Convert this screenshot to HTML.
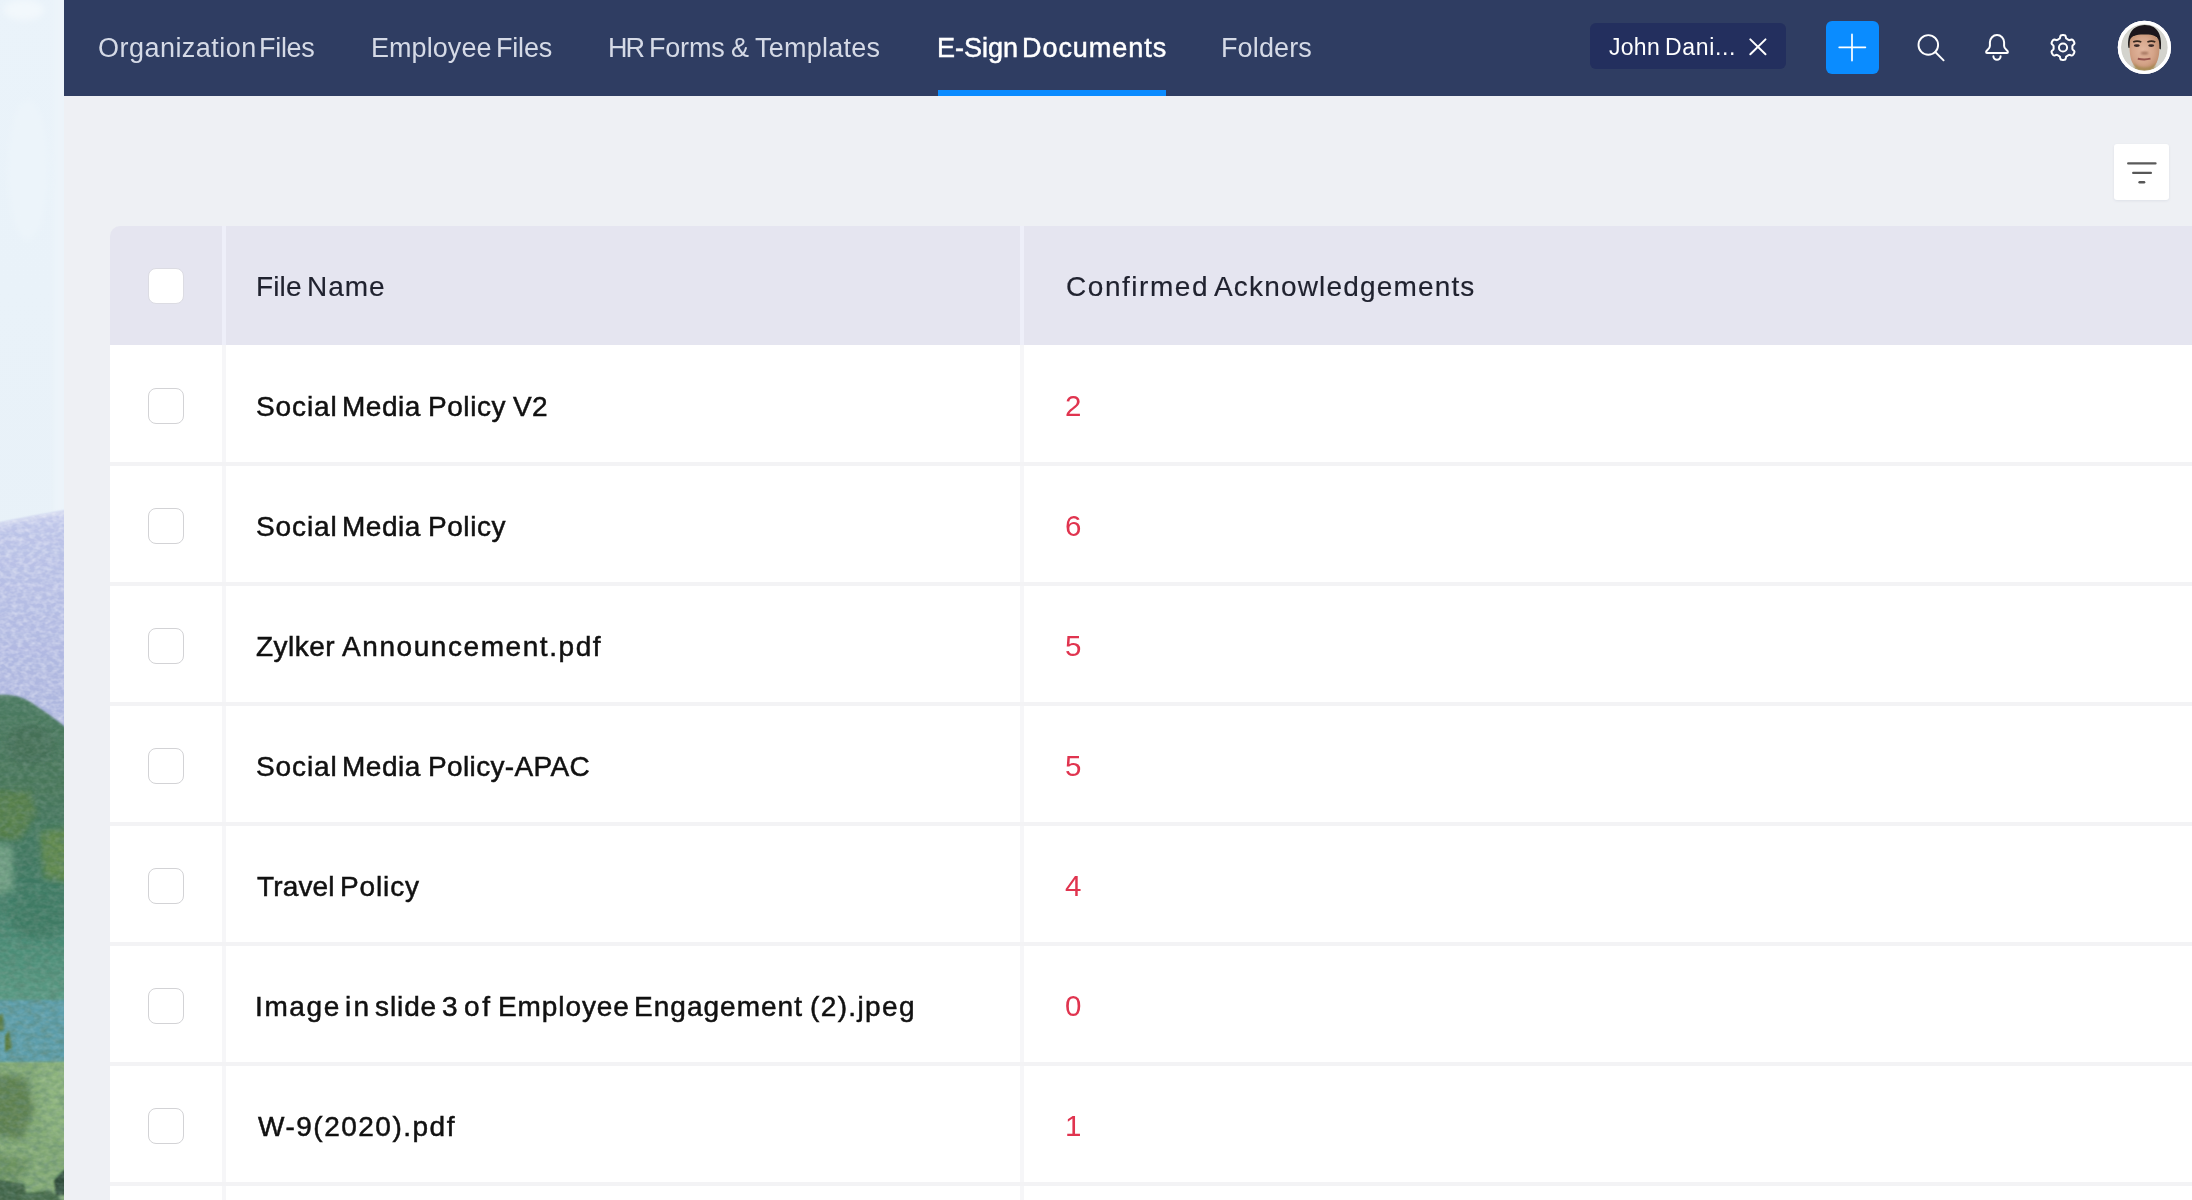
<!DOCTYPE html>
<html>
<head>
<meta charset="utf-8">
<title>E-Sign Documents</title>
<style>
*{box-sizing:border-box;margin:0;padding:0}
html,body{width:2192px;height:1200px;overflow:hidden;background:#eef0f4;font-family:"Liberation Sans",sans-serif;}
#root{position:absolute;left:0;top:0;width:2192px;height:1200px;overflow:hidden;background:#eef0f4}
.abs{position:absolute}
.t{position:absolute;white-space:nowrap;line-height:1;transform-origin:0 0;will-change:transform}
#strip{position:absolute;left:0;top:0;width:64px;height:1200px;overflow:hidden}
#nav{position:absolute;left:64px;top:0;width:2128px;height:96px;background:#2f3d62}
.nv{color:#d5dae6;font-size:27px}
.nva{color:#ffffff;font-size:27px;-webkit-text-stroke:0.5px #fff}
.chip{color:#fff;font-size:23px}
#uline{position:absolute;left:938px;top:90px;width:228px;height:6px;background:#0b8cff}
#chip{position:absolute;left:1590px;top:23px;width:196px;height:46px;border-radius:6px;background:#232f5e}
#plus{position:absolute;left:1826px;top:20.6px;width:52.6px;height:53.5px;border-radius:6px;background:#0a8cff}
#filter{position:absolute;left:2113.7px;top:144px;width:55.6px;height:56px;border-radius:3px;background:#fff;box-shadow:0 1px 3px rgba(40,50,90,.08)}
#thead{position:absolute;left:110px;top:226px;width:2090px;height:119px;background:#e5e5f0;border-top-left-radius:10px}
#tbody{position:absolute;left:110px;top:345px;width:2090px;height:860px;background:#fff}
.hs{position:absolute;top:226px;width:3.6px;height:119px;background:#eeeff9}
.vs{position:absolute;top:345px;width:3.6px;height:860px;background:#f6f6f8}
.rs{position:absolute;left:110px;width:2090px;height:3.6px;background:#f3f3f5}
.cb{position:absolute;left:148px;width:35.5px;height:35.5px;border-radius:8px;border:1.5px solid #d3d3d6;background:#fff}
.cbh{border:1.2px solid #dcdce3}
.fn{color:#111;font-size:28px;left:256px;-webkit-text-stroke:0.5px #111}
.num{color:#e0344f;font-size:29.5px;left:1065.4px}
.th{color:#20222f;font-size:28px;-webkit-text-stroke:0.15px #20222f}
</style>
</head>
<body>
<div id="root">
  <div id="strip"><svg width="104" height="1240" viewBox="-20 -20 104 1240" style="position:absolute;left:-20px;top:-20px">
    <defs>
      <linearGradient id="sky" x1="0" y1="0" x2="0" y2="1"><stop offset="0" stop-color="#eaf3fa"/><stop offset="0.5" stop-color="#e8f1f8"/><stop offset="1" stop-color="#e5eef7"/></linearGradient>
      <linearGradient id="mtn" gradientUnits="userSpaceOnUse" x1="0" y1="508" x2="0" y2="730"><stop offset="0" stop-color="#c6cced"/><stop offset="0.12" stop-color="#bbc3e7"/><stop offset="0.6" stop-color="#b2bae2"/><stop offset="1" stop-color="#acb5de"/></linearGradient>
      <linearGradient id="grn" gradientUnits="userSpaceOnUse" x1="0" y1="695" x2="0" y2="1005"><stop offset="0" stop-color="#4b7a5f"/><stop offset="0.3" stop-color="#477659"/><stop offset="0.6" stop-color="#3d7862"/><stop offset="0.82" stop-color="#4c8d77"/><stop offset="1" stop-color="#5a9a84"/></linearGradient>
      <filter id="tex" filterUnits="userSpaceOnUse" x="-20" y="480" width="104" height="760"><feTurbulence type="fractalNoise" baseFrequency="0.17 0.24" numOctaves="2" seed="7" result="n"/><feColorMatrix in="n" type="matrix" values="0 0 0 0 1  0 0 0 0 1  0 0 0 0 1  1.8 0 0 0 -0.62"/></filter>
      <filter id="texd" filterUnits="userSpaceOnUse" x="-20" y="680" width="104" height="540"><feTurbulence type="fractalNoise" baseFrequency="0.12 0.18" numOctaves="2" seed="23" result="n"/><feColorMatrix in="n" type="matrix" values="0 0 0 0 0.1  0 0 0 0 0.22  0 0 0 0 0.16  0 1.8 0 0 -0.62"/></filter>
      <filter id="sb" filterUnits="userSpaceOnUse" x="-20" y="-20" width="104" height="1240"><feGaussianBlur stdDeviation="3"/></filter>
      <filter id="sb1" filterUnits="userSpaceOnUse" x="-20" y="-20" width="104" height="1240"><feGaussianBlur stdDeviation="1.1"/></filter>
      <clipPath id="cm"><path d="M-20 527 C10 520 40 515 84 507 V1220 H-20 Z"/></clipPath>
      <clipPath id="cg"><path d="M-20 700 C-4 692 18 694 30 702 C44 711 54 718 84 742 V1220 H-20 Z"/></clipPath>
    </defs>
    <rect x="-20" y="-20" width="104" height="1240" fill="url(#sky)"/>
    <g filter="url(#sb)"><ellipse cx="24" cy="10" rx="20" ry="10" fill="#f2f8fc"/><ellipse cx="28" cy="170" rx="20" ry="70" fill="#ecf4fa"/><rect x="54" y="-20" width="12" height="540" fill="#edf4fa"/></g>
    <path d="M-20 527 C10 520 40 515 84 507 V760 H-20 Z" fill="url(#mtn)" filter="url(#sb1)"/>
    <path d="M-20 529 C10 522 40 517 84 509" stroke="#d5daf0" stroke-width="3" fill="none" filter="url(#sb1)"/>
    <g clip-path="url(#cm)"><rect x="-20" y="480" width="104" height="300" filter="url(#tex)" opacity="0.42"/></g>
    <path d="M-20 700 C-4 692 18 694 30 702 C44 711 54 718 84 742 V1010 H-20 Z" fill="url(#grn)" filter="url(#sb1)"/>
    <g filter="url(#sb)">
      <path d="M-20 790 L30 792 L36 812 L20 840 L-20 838 Z" fill="#587f47" opacity=".85"/>
      <path d="M40 832 L84 826 L84 886 L44 878 Z" fill="#638a48" opacity=".85"/>
      <path d="M-20 842 L12 846 L14 890 L-20 900 Z" fill="#7aa78a" opacity=".85"/>
      <ellipse cx="30" cy="745" rx="24" ry="20" fill="#456f57"/>
      <ellipse cx="40" cy="915" rx="30" ry="24" fill="#3c7a63"/>
    </g>
    <rect x="-20" y="1000" width="104" height="64" fill="#5d9eab" filter="url(#sb1)"/>
    <rect x="-20" y="1062" width="104" height="160" fill="#84aa75" filter="url(#sb1)"/>
    <g filter="url(#sb)">
      <path d="M-20 1072 L26 1078 L34 1110 L22 1140 L-20 1132 Z" fill="#5f8150"/>
      <path d="M36 1066 L84 1062 L84 1150 L44 1130 Z" fill="#8eb47d"/>
      <path d="M-20 1150 L30 1160 L20 1182 L-20 1178 Z" fill="#6d935f"/>
    </g>
    <g filter="url(#sb1)">
      <path d="M-4 1016 L3 1014 L4 1030 L-4 1032 Z M5 1036 L9 1030 L12 1048 L5 1052 Z" fill="#5a7a3e"/>
      <path d="M-20 1176 L24 1184 L34 1220 L-20 1220 Z" fill="#3f6244"/>
      <path d="M84 1150 L54 1180 L56 1196 L84 1192 Z" fill="#2f4a38"/>
      <path d="M20 1194 L50 1190 L84 1220 L20 1220 Z" fill="#476b4a"/>
    </g>
    <g clip-path="url(#cg)"><rect x="-20" y="680" width="104" height="540" filter="url(#texd)" opacity="0.55"/><rect x="-20" y="680" width="104" height="540" filter="url(#tex)" opacity="0.13"/></g>
  </svg></div>
  <div id="nav"></div>
  <div id="uline"></div>
  <div id="chip"></div>
  <div id="plus"></div>
  <div id="filter"></div>

  <div id="thead"></div>
  <div id="tbody"></div>
  <div class="hs" style="left:222.2px"></div>
  <div class="hs" style="left:1020.2px"></div>
  <div class="vs" style="left:222.2px"></div>
  <div class="vs" style="left:1020.2px"></div>

  <div class="rs" style="top:462px"></div>
  <div class="rs" style="top:582px"></div>
  <div class="rs" style="top:702px"></div>
  <div class="rs" style="top:822px"></div>
  <div class="rs" style="top:942px"></div>
  <div class="rs" style="top:1062px"></div>
  <div class="rs" style="top:1182px"></div>

  <div class="cb cbh" style="top:268px"></div>
  <div class="cb" style="top:388px"></div>
  <div class="cb" style="top:508px"></div>
  <div class="cb" style="top:628px"></div>
  <div class="cb" style="top:748px"></div>
  <div class="cb" style="top:868px"></div>
  <div class="cb" style="top:988px"></div>
  <div class="cb" style="top:1108px"></div>

  <!--ICONS-START-->
  <svg class="abs" style="left:1740px;top:30px" width="36" height="34" viewBox="1740 30 36 34"><path d="M1750.3 39.4 L1765.5 54.2 M1765.5 39.4 L1750.3 54.2" stroke="#fff" stroke-width="2" fill="none" stroke-linecap="round"/></svg>
  <svg class="abs" style="left:1826px;top:20px" width="54" height="55" viewBox="1826 20 54 55"><path d="M1839.2 47.3 H1865.4 M1852 34.4 V60.6" stroke="#fff" stroke-width="1.7" fill="none" stroke-linecap="round"/></svg>
  <svg class="abs" style="left:1910px;top:26px" width="44" height="44" viewBox="1910 26 44 44"><circle cx="1928.3" cy="44.9" r="9.8" stroke="#fff" stroke-width="1.9" fill="none"/><path d="M1935.3 52 L1943.6 60.3" stroke="#fff" stroke-width="1.9" stroke-linecap="round"/></svg>
  <svg class="abs" style="left:1976px;top:26px" width="42" height="44" viewBox="-21 26 42 44"><path d="M-7.1 42.3 A7.1 7.2 0 0 1 7.1 42.3 V46 C7.1 49.2 10.9 50 10.9 52 Q10.9 52.9 10 52.9 H-10 Q-10.9 52.9 -10.9 52 C-10.9 50 -7.1 49.2 -7.1 46 Z" stroke="#fff" stroke-width="2" fill="none" stroke-linejoin="round"/><path d="M-3.6 56.3 A3.6 3.4 0 0 0 3.6 56.3" stroke="#fff" stroke-width="2" fill="none" stroke-linecap="round"/></svg>
  <svg class="abs" style="left:2042px;top:27px" width="42" height="42" viewBox="-21 -20.5 42 42"><path d="M9.40 -0.00L9.39 -0.41L9.38 -0.82L9.38 -1.24L9.46 -1.67L9.80 -2.17L10.53 -2.82L11.22 -3.54L11.45 -4.17L11.40 -4.72L11.22 -5.23L11.00 -5.72L10.74 -6.20L10.45 -6.66L10.14 -7.10L9.79 -7.51L9.34 -7.84L8.67 -7.95L7.71 -7.71L6.78 -7.40L6.18 -7.36L5.76 -7.51L5.40 -7.72L5.05 -7.93L4.70 -8.14L4.34 -8.34L3.98 -8.54L3.62 -8.75L3.29 -9.03L3.02 -9.57L2.82 -10.53L2.55 -11.49L2.12 -12.00L1.61 -12.23L1.08 -12.33L0.54 -12.38L0.00 -12.40L-0.54 -12.38L-1.08 -12.33L-1.61 -12.23L-2.12 -12.00L-2.55 -11.49L-2.82 -10.53L-3.02 -9.57L-3.29 -9.03L-3.62 -8.75L-3.98 -8.54L-4.34 -8.34L-4.70 -8.14L-5.05 -7.93L-5.40 -7.72L-5.76 -7.51L-6.18 -7.36L-6.78 -7.40L-7.71 -7.71L-8.67 -7.95L-9.34 -7.84L-9.79 -7.51L-10.14 -7.10L-10.45 -6.66L-10.74 -6.20L-11.00 -5.72L-11.22 -5.23L-11.40 -4.72L-11.45 -4.17L-11.22 -3.54L-10.53 -2.82L-9.80 -2.17L-9.46 -1.67L-9.38 -1.24L-9.38 -0.82L-9.39 -0.41L-9.40 -0.00L-9.39 0.41L-9.38 0.82L-9.38 1.24L-9.46 1.67L-9.80 2.17L-10.53 2.82L-11.22 3.54L-11.45 4.17L-11.40 4.72L-11.22 5.23L-11.00 5.72L-10.74 6.20L-10.45 6.66L-10.14 7.10L-9.79 7.51L-9.34 7.84L-8.67 7.95L-7.71 7.71L-6.78 7.40L-6.18 7.36L-5.76 7.51L-5.40 7.72L-5.05 7.93L-4.70 8.14L-4.34 8.34L-3.98 8.54L-3.62 8.75L-3.29 9.03L-3.02 9.57L-2.82 10.53L-2.55 11.49L-2.12 12.00L-1.61 12.23L-1.08 12.33L-0.54 12.38L-0.00 12.40L0.54 12.38L1.08 12.33L1.61 12.23L2.12 12.00L2.55 11.49L2.82 10.53L3.02 9.57L3.29 9.03L3.62 8.75L3.98 8.54L4.34 8.34L4.70 8.14L5.05 7.93L5.40 7.72L5.76 7.51L6.18 7.36L6.78 7.40L7.71 7.71L8.67 7.95L9.34 7.84L9.79 7.51L10.14 7.10L10.45 6.66L10.74 6.20L11.00 5.72L11.22 5.23L11.40 4.72L11.45 4.17L11.22 3.54L10.53 2.82L9.80 2.17L9.46 1.67L9.38 1.24L9.38 0.82L9.39 0.41Z" stroke="#fff" stroke-width="2" fill="none" stroke-linejoin="round"/><circle cx="0" cy="0" r="4.1" stroke="#fff" stroke-width="2" fill="none"/></svg>
  <svg class="abs" style="left:2117px;top:20px" width="56" height="56" viewBox="0 0 56 56">
    <defs>
      <clipPath id="avc"><circle cx="27.4" cy="27.4" r="23.5"/></clipPath>
      <filter id="avb" x="-20%" y="-20%" width="140%" height="140%"><feGaussianBlur stdDeviation="0.7"/></filter>
      <filter id="avb2" x="-20%" y="-20%" width="140%" height="140%"><feGaussianBlur stdDeviation="1.3"/></filter>
      <radialGradient id="skin" cx="0.45" cy="0.45" r="0.6"><stop offset="0" stop-color="#e3b8a0"/><stop offset="0.6" stop-color="#d5a489"/><stop offset="1" stop-color="#bf8c6c"/></radialGradient>
    </defs>
    <circle cx="27.4" cy="27.4" r="26.6" fill="#fff"/>
    <g clip-path="url(#avc)">
      <rect x="0" y="0" width="56" height="56" fill="#d3d3cd"/>
      <g filter="url(#avb)">
        <path d="M11.6 28 C10 19 12.5 5.2 27.8 5 C42 5 45.2 17 43.8 29.5 L41 28 L39.8 17 L16 16.5 L14 27.5 Z" fill="#1b191a"/>
        <path d="M12.8 21 C13.2 15.8 20 14.2 27.6 14.4 C35 14.2 41.4 15.8 42 21.5 C43 29 42.4 37 39.6 42.8 C36.8 48.4 31.8 50 27.6 50 C23.4 50 18.3 48.4 15.4 42.8 C12.6 37 12.2 28 12.8 21 Z" fill="url(#skin)"/>
      </g>
      <g filter="url(#avb2)">
        <path d="M17 43 C22 49 33 49 38.5 43 L37 52 L18 52 Z" fill="#a3884f" opacity=".85"/>
        <ellipse cx="27.5" cy="33.2" rx="3.8" ry="1.4" fill="#8a5a44" opacity=".75"/>
      </g>
      <g filter="url(#avb)">
        <path d="M16.2 22 Q20 20.3 24.3 22 M30.4 22 Q34.5 20.3 38.3 22" stroke="#35261f" stroke-width="1.7" fill="none"/>
        <ellipse cx="19.8" cy="25.6" rx="3" ry="1.4" fill="#3a2a28"/><ellipse cx="34.2" cy="25.6" rx="3" ry="1.4" fill="#3a2a28"/>
        <path d="M20.8 38.7 Q27.3 40.2 33.5 38.7" stroke="#96544e" stroke-width="1.9" fill="none"/>
      </g>
    </g>
    <circle cx="27.4" cy="27.4" r="25" fill="none" stroke="#fff" stroke-width="3.3"/>
  </svg>
  <svg class="abs" style="left:2114px;top:144px" width="56" height="56" viewBox="2114 144 56 56"><path d="M2128.2 163.4 H2155.5" stroke="#5a5a5a" stroke-width="2.3" stroke-linecap="round"/><path d="M2133.2 172.9 H2150.9" stroke="#575757" stroke-width="2.3" stroke-linecap="round"/><path d="M2139.6 182.2 H2144.1" stroke="#575757" stroke-width="2.4" stroke-linecap="round"/></svg>
  <!--ICONS-END-->
  <!--TEXT-START-->
  <div class="t nv" id="n1w0" style="left:97.5px;top:35px;letter-spacing:0.47px">Organization</div>
  <div class="t nv" id="n1w1" style="left:259.4px;top:35px;letter-spacing:-0.30px">Files</div>
  <div class="t nv" id="n2w0" style="left:371.1px;top:35px;letter-spacing:0.06px">Employee</div>
  <div class="t nv" id="n2w1" style="left:496.1px;top:35px;letter-spacing:-0.20px">Files</div>
  <div class="t nv" id="n3w0" style="left:607.5px;top:35px;letter-spacing:-2.00px">HR</div>
  <div class="t nv" id="n3w1" style="left:649.1px;top:35px;letter-spacing:-0.20px">Forms</div>
  <div class="t nv" id="n3w2" style="left:731.0px;top:35px;letter-spacing:0.00px">&amp;</div>
  <div class="t nv" id="n3w3" style="left:755.3px;top:35px;letter-spacing:0.25px">Templates</div>
  <div class="t nva" id="n4w0" style="left:937.1px;top:35px;letter-spacing:-0.00px">E-Sign</div>
  <div class="t nva" id="n4w1" style="left:1022.0px;top:35px;letter-spacing:0.95px">Documents</div>
  <div class="t nv" id="n5w0" style="left:1221.0px;top:35px;letter-spacing:0.13px">Folders</div>
  <div class="t chip" id="n6w0" style="left:1609.3px;top:36px;letter-spacing:0.27px">John</div>
  <div class="t chip" id="n6w1" style="left:1664.9px;top:36px;letter-spacing:0.67px">Dani...</div>
  <div class="t th" id="h1w0" style="left:255.7px;top:273px;letter-spacing:0.13px">File</div>
  <div class="t th" id="h1w1" style="left:307.3px;top:273px;letter-spacing:0.93px">Name</div>
  <div class="t th" id="h2w0" style="left:1065.7px;top:273px;letter-spacing:1.55px">Confirmed</div>
  <div class="t th" id="h2w1" style="left:1214.2px;top:273px;letter-spacing:1.17px">Acknowledgements</div>
  <div class="t fn" id="r1w0" style="left:255.6px;top:393px;letter-spacing:0.88px">Social</div>
  <div class="t fn" id="r1w1" style="left:342.0px;top:393px;letter-spacing:0.50px">Media</div>
  <div class="t fn" id="r1w2" style="left:428.2px;top:393px;letter-spacing:0.56px">Policy</div>
  <div class="t fn" id="r1w3" style="left:513.3px;top:393px;letter-spacing:0.40px">V2</div>
  <div class="t fn" id="r2w0" style="left:255.6px;top:513px;letter-spacing:0.88px">Social</div>
  <div class="t fn" id="r2w1" style="left:342.0px;top:513px;letter-spacing:0.50px">Media</div>
  <div class="t fn" id="r2w2" style="left:428.2px;top:513px;letter-spacing:0.56px">Policy</div>
  <div class="t fn" id="r3w0" style="left:255.6px;top:633px;letter-spacing:0.48px">Zylker</div>
  <div class="t fn" id="r3w1" style="left:342.2px;top:633px;letter-spacing:1.57px">Announcement.pdf</div>
  <div class="t fn" id="r4w0" style="left:255.6px;top:753px;letter-spacing:0.88px">Social</div>
  <div class="t fn" id="r4w1" style="left:342.0px;top:753px;letter-spacing:0.50px">Media</div>
  <div class="t fn" id="r4w2" style="left:428.2px;top:753px;letter-spacing:0.36px">Policy-APAC</div>
  <div class="t fn" id="r5w0" style="left:256.6px;top:873px;letter-spacing:0.16px">Travel</div>
  <div class="t fn" id="r5w1" style="left:339.5px;top:873px;letter-spacing:0.88px">Policy</div>
  <div class="t fn" id="r6w0" style="left:254.8px;top:993px;letter-spacing:1.60px">Image</div>
  <div class="t fn" id="r6w1" style="left:345.1px;top:993px;letter-spacing:2.2px">in</div>
  <div class="t fn" id="r6w2" style="left:374.9px;top:993px;letter-spacing:0.90px">slide</div>
  <div class="t fn" id="r6w3" style="left:441.7px;top:993px;letter-spacing:0.00px">3</div>
  <div class="t fn" id="r6w4" style="left:464.4px;top:993px;letter-spacing:2.80px">of</div>
  <div class="t fn" id="r6w5" style="left:497.9px;top:993px;letter-spacing:0.91px">Employee</div>
  <div class="t fn" id="r6w6" style="left:634.0px;top:993px;letter-spacing:1.02px">Engagement</div>
  <div class="t fn" id="r6w7" style="left:809.5px;top:993px;letter-spacing:1.37px">(2).jpeg</div>
  <div class="t fn" id="r7w0" style="left:257.9px;top:1113px;letter-spacing:1.50px">W-9(2020).pdf</div>
  <!--TEXT-END-->
  <div class="t num" id="c1" style="top:391px">2</div>
  <div class="t num" id="c2" style="top:511px">6</div>
  <div class="t num" id="c3" style="top:631px">5</div>
  <div class="t num" id="c4" style="top:751px">5</div>
  <div class="t num" id="c5" style="top:871px">4</div>
  <div class="t num" id="c6" style="top:991px">0</div>
  <div class="t num" id="c7" style="top:1111px">1</div>
</div>
</body>
</html>
